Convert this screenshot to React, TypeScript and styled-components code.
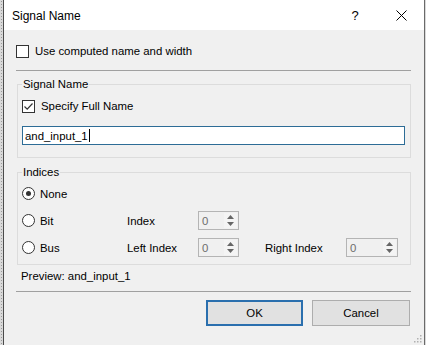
import styled, { createGlobalStyle } from "styled-components";

const GlobalStyle = createGlobalStyle`
  html, body {
    margin: 0;
    padding: 0;
  }
  body {
    background-color: #d9d9d9;
    background-image: radial-gradient(#9a9a9a 0.6px, transparent 0.8px);
    background-size: 3px 3px;
    font-family: "Liberation Sans", Arial, sans-serif;
    font-size: 11.4px;
    color: #000;
  }
`;

const Window = styled.div`
  position: relative;
  box-sizing: border-box;
  margin-left: 3px;
  width: 422px;
  height: 345px;
  border-left: 1px solid #4a4a4a;
  border-right: 1px solid #6a6a6a;
  background: #f0f0f0;
  display: flex;
  flex-direction: column;
  overflow: hidden;
`;

const TitleBar = styled.div`
  height: 30px;
  background: #ffffff;
  display: flex;
  align-items: center;
  padding-left: 8px;
`;

const Title = styled.div`
  flex: 1;
  font-size: 12px;
  padding-top: 1px;
`;

const CaptionButton = styled.div`
  width: 46px;
  height: 30px;
  display: flex;
  align-items: center;
  justify-content: center;
  font-size: 13px;
`;

const Content = styled.div`
  padding: 0 13px 0 12px;
  display: flex;
  flex-direction: column;
`;

const CheckRow = styled.div<{ $top: number }>`
  display: flex;
  align-items: center;
  gap: 6px;
  height: 14px;
  margin-top: ${(p) => p.$top}px;
  line-height: 14px;
`;

const Box = styled.div`
  box-sizing: border-box;
  width: 13px;
  height: 13px;
  border: 1px solid #333;
  background: #fff;
  display: flex;
  align-items: center;
  justify-content: center;
`;

const Separator = styled.div<{ $top: number }>`
  height: 1px;
  background: #a0a0a0;
  margin-top: ${(p) => p.$top}px;
`;

const Group = styled.fieldset<{ $top: number; $bottom: number }>`
  margin: ${(p) => p.$top}px 0 0 1px;
  padding: 0 5px ${(p) => p.$bottom}px 4px;
  border: 1px solid #dcdcdc;
  min-width: 0;
`;

const Legend = styled.legend`
  padding: 0 1px;
  line-height: 14px;
  font-size: 11.4px;
`;

const TextField = styled.div`
  box-sizing: border-box;
  margin-top: 13px;
  height: 19px;
  border: 1px solid #2d6c96;
  background: #fff;
  padding-left: 2px;
  display: flex;
  align-items: center;
  line-height: 14px;
`;

const Caret = styled.span`
  display: inline-block;
  width: 1px;
  height: 13px;
  background: #000;
  margin-left: 1px;
`;

const Rows = styled.div`
  margin-top: 5px;
  display: flex;
  flex-direction: column;
  gap: 8px;
`;

const Row = styled.div`
  height: 19px;
  display: flex;
  align-items: center;
`;

const Cell = styled.div<{ $w: number }>`
  width: ${(p) => p.$w}px;
  flex-shrink: 0;
  display: flex;
  align-items: center;
  gap: 5px;
  line-height: 14px;
`;

const Radio = styled.div<{ $on?: boolean }>`
  box-sizing: border-box;
  width: 13px;
  height: 13px;
  border-radius: 50%;
  border: 1px solid #333;
  background: #fff;
  display: flex;
  align-items: center;
  justify-content: center;

  &::after {
    content: "";
    width: 5px;
    height: 5px;
    border-radius: 50%;
    background: ${(p) => (p.$on ? "#333" : "transparent")};
  }
`;

const Spin = styled.div<{ $w: number }>`
  box-sizing: border-box;
  width: ${(p) => p.$w}px;
  height: 19px;
  border: 1px solid #b4b4b4;
  background: #f0f0f0;
  display: flex;
  align-items: center;
  flex-shrink: 0;
`;

const SpinValue = styled.div`
  flex: 1;
  padding-left: 3px;
  color: #6d6d6d;
  line-height: 14px;
`;

const SpinArrows = styled.div`
  width: 13px;
  height: 15px;
  margin-right: 1px;
  display: flex;
  flex-direction: column;
  align-items: center;
  justify-content: center;
  gap: 3px;
  background: #f4f4f4;
`;

const Preview = styled.div`
  margin-top: 4px;
  padding-left: 5px;
  line-height: 14px;
`;

const Buttons = styled.div`
  margin-top: 8px;
  display: flex;
  justify-content: flex-end;
  gap: 9px;
  padding-right: 1px;
`;

const Button = styled.div<{ $primary?: boolean; $w: number }>`
  box-sizing: border-box;
  width: ${(p) => p.$w}px;
  height: 26px;
  background: #e1e1e1;
  border: ${(p) => (p.$primary ? "2px solid #2a6fae" : "1px solid #adadad")};
  display: flex;
  align-items: center;
  justify-content: center;
`;

const Grip = styled.svg`
  position: absolute;
  right: 2px;
  bottom: 2px;
`;

const Check = () => (
  <svg width="11" height="11" viewBox="0 0 11 11">
    <polyline points="1.5,5.5 4.2,8.2 9.5,2.5" fill="none" stroke="#333" strokeWidth="1.2" />
  </svg>
);

const Arrows = () => (
  <SpinArrows>
    <svg width="7" height="4" viewBox="0 0 7 4">
      <polygon points="3.5,0 7,4 0,4" fill="#666" />
    </svg>
    <svg width="7" height="4" viewBox="0 0 7 4">
      <polygon points="0,0 7,0 3.5,4" fill="#666" />
    </svg>
  </SpinArrows>
);

export default function App() {
  return (
    <>
      <GlobalStyle />
      <Window>
        <TitleBar>
          <Title>Signal Name</Title>
          <CaptionButton>?</CaptionButton>
          <CaptionButton>
            <svg width="11" height="11" viewBox="0 0 11 11">
              <path d="M0.5 0.5 L10.5 10.5 M10.5 0.5 L0.5 10.5" stroke="#000" strokeWidth="1" />
            </svg>
          </CaptionButton>
        </TitleBar>
        <Content>
          <CheckRow $top={14}>
            <Box />
            <span>Use computed name and width</span>
          </CheckRow>
          <Separator $top={12} />
          <Group $top={6} $bottom={12}>
            <Legend>Signal Name</Legend>
            <CheckRow $top={8}>
              <Box>
                <Check />
              </Box>
              <span>Specify Full Name</span>
            </CheckRow>
            <TextField>
              and_input_1
              <Caret />
            </TextField>
          </Group>
          <Group $top={7} $bottom={7}>
            <Legend>Indices</Legend>
            <Rows>
              <Row>
                <Cell $w={105}>
                  <Radio $on />
                  <span>None</span>
                </Cell>
              </Row>
              <Row>
                <Cell $w={105}>
                  <Radio />
                  <span>Bit</span>
                </Cell>
                <Cell $w={71}>Index</Cell>
                <Spin $w={41}>
                  <SpinValue>0</SpinValue>
                  <Arrows />
                </Spin>
              </Row>
              <Row>
                <Cell $w={105}>
                  <Radio />
                  <span>Bus</span>
                </Cell>
                <Cell $w={71}>Left Index</Cell>
                <Spin $w={41}>
                  <SpinValue>0</SpinValue>
                  <Arrows />
                </Spin>
                <Cell $w={26} />
                <Cell $w={81}>Right Index</Cell>
                <Spin $w={52}>
                  <SpinValue>0</SpinValue>
                  <Arrows />
                </Spin>
              </Row>
            </Rows>
          </Group>
          <Preview>Preview: and_input_1</Preview>
          <Separator $top={8} />
          <Buttons>
            <Button $primary $w={97}>OK</Button>
            <Button $w={98}>Cancel</Button>
          </Buttons>
        </Content>
        <Grip width="10" height="10" viewBox="0 0 10 10">
          {[
            [8, 2],
            [8, 5],
            [5, 5],
            [8, 8],
            [5, 8],
            [2, 8],
          ].map(([x, y]) => (
            <rect key={`${x}-${y}`} x={x} y={y} width="1.5" height="1.5" fill="#b0b0b0" />
          ))}
        </Grip>
      </Window>
    </>
  );
}
